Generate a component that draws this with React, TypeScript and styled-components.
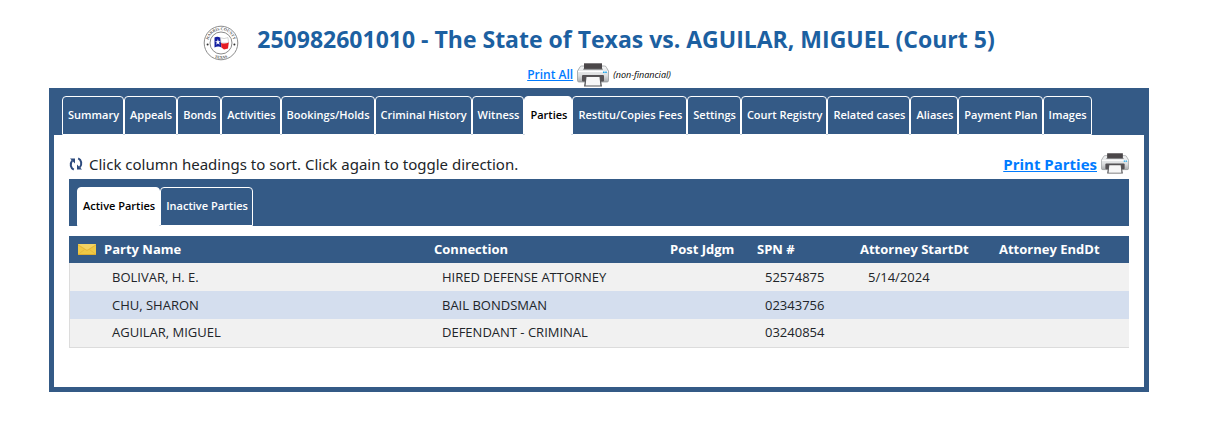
import React, { useState } from "react";
import styled, { createGlobalStyle } from "styled-components";

const BLUE = "#345a86";
const LINK = "#007bff";

const GlobalStyle = createGlobalStyle`
  *, *::before, *::after { box-sizing: border-box; }
  body {
    margin: 0;
    background: #fff;
    color: #212529;
    font-family: "Segoe UI", "Open Sans", "Noto Sans", sans-serif;
    font-size: 16px;
    line-height: 24px;
  }
  button { font: inherit; color: inherit; cursor: pointer; }
`;

const Page = styled.main`
  padding: 24px 69px 24px 49px;
`;

const CaseHeader = styled.header`
  display: flex;
  align-items: center;
  justify-content: center;
  gap: 18px;
  height: 38px;
`;

const CaseTitle = styled.h1`
  margin: 0;
  padding-bottom: 8px;
  font-size: 23px;
  line-height: 32px;
  font-weight: 700;
  color: #1c60a1;
`;

const PrintRow = styled.div`
  display: flex;
  align-items: center;
  justify-content: center;
  gap: 4px;
  height: 26px;
`;

const PrintLink = styled.a<{ $large?: boolean }>`
  display: inline-flex;
  align-items: center;
  gap: 4px;
  color: ${LINK};
  font-size: ${(p) => (p.$large ? 15 : 12)}px;
  font-weight: ${(p) => (p.$large ? 700 : 600)};
`;

const Note = styled.em`
  font-size: 9px;
  line-height: 16px;
  color: #000;
`;

const Frame = styled.section`
  border: 5px solid ${BLUE};
  border-top: 0;
`;

const TabStrip = styled.div`
  display: flex;
  flex-wrap: wrap;
  background: ${BLUE};
  padding: 8px 8px 0;
`;

const Tab = styled.button<{ $active: boolean }>`
  height: 39px;
  padding: 0 4px 2px 5px;
  border: 1px solid #fff;
  border-radius: 4px 4px 0 0;
  background: ${(p) => (p.$active ? "#fff" : BLUE)};
  color: ${(p) => (p.$active ? "#000" : "#fff")};
  font-size: 11px;
  font-weight: 600;
  white-space: nowrap;
`;

const Panel = styled.div`
  padding: 16px 15px 39px;
`;

const HintRow = styled.div`
  display: flex;
  align-items: center;
  justify-content: space-between;
  height: 28px;
  padding-bottom: 3px;
`;

const Hint = styled.p`
  display: flex;
  align-items: center;
  gap: 6px;
  margin: 0;
  font-family: "Segoe UI", "Noto Sans", sans-serif;
  font-size: 15px;
`;

const PartyTable = styled.table`
  width: 100%;
  margin-top: 10px;
  table-layout: fixed;
  border-collapse: collapse;
  border-bottom: 1px solid #dcdcdc;
  font-size: 13px;
  line-height: 18px;
`;

const Col = styled.col<{ $w?: number }>`
  width: ${(p) => (p.$w ? `${p.$w}px` : "auto")};
`;

const HeadCell = styled.th`
  height: 27px;
  padding: 0 0 2px;
  background: ${BLUE};
  color: #fff;
  text-align: left;
  vertical-align: middle;
  font-size: 13px;
`;

const SortButton = styled.button`
  padding: 0;
  border: 0;
  background: none;
  font-weight: 700;
  white-space: nowrap;
`;

const MailCell = styled(HeadCell)`
  padding: 0 0 0 9px;
  svg { display: block; }
`;

const Row = styled.tr`
  height: 28px;
  background: #f1f1f1;
  box-shadow: inset 1px 0 #dcdcdc;
  &:nth-child(even) { background: #d4deee; }
`;

const Cell = styled.td`
  padding: 0 8px 1px;
  white-space: nowrap;
`;

function Printer({ width }: { width: number }) {
  return (
    <svg width={width} height={width * 0.75} viewBox="0 0 32 24" aria-hidden="true">
      <defs>
        <linearGradient id="body" x1="0" y1="0" x2="0" y2="1">
          <stop offset="0" stopColor="#f4f5f6" />
          <stop offset="0.6" stopColor="#dcdedf" />
          <stop offset="1" stopColor="#a9abad" />
        </linearGradient>
      </defs>
      <path d="M3 4 Q3.4 3 4.6 3 H27.4 Q29 3 29.4 4.4 L31.5 8 V17.6 Q31.5 19 30 19 H2 Q.5 19 .5 17.6 V8 Z" fill="url(#body)" stroke="#8d9092" strokeWidth=".7" />
      <rect x="7" y=".3" width="18" height="6" fill="#4b4749" />
      <path d="M6 6.2 H26" stroke="#77797b" strokeWidth=".8" />
      <path d="M1 8.5 H31" stroke="#fff" strokeWidth="1" />
      <rect x="5" y="12" width="22" height="6.5" rx="1" fill="#555255" />
      <path d="M8.6 13.5 H23.4 L25 23.5 H7 Z" fill="#58585a" />
      <path d="M9.5 14 H22.5 L23.4 22.6 H8.6 Z" fill="#f7f7f7" />
      <path d="M26 9.3 H27.6 M28.2 9.3 H29.8" stroke="#1ba5ea" strokeWidth="1.5" />
    </svg>
  );
}

function Seal() {
  return (
    <svg width="36" height="36" viewBox="0 0 36 36" role="img" aria-label="County seal">
      <defs>
        <path id="sealTop" d="M5.2 18 A12.8 12.8 0 0 1 30.8 18" />
        <path id="sealBottom" d="M2.2 18 A15.8 15.8 0 0 0 33.8 18" />
      </defs>
      <circle cx="18" cy="18" r="16.8" fill="#fff" stroke="#8b8b8b" strokeWidth="1" />
      <circle cx="18" cy="18" r="11" fill="#fff" stroke="#8b8b8b" strokeWidth="1" />
      <g fontFamily="Liberation Serif, serif" fontSize="4" fontWeight="700" fill="#555" textAnchor="middle">
        <text><textPath href="#sealTop" startOffset="50%">HARRIS COUNTY</textPath></text>
        <text><textPath href="#sealBottom" startOffset="50%">TEXAS</textPath></text>
      </g>
      <circle cx="4.6" cy="19.5" r="1" fill="#333" />
      <circle cx="31.4" cy="19.5" r="1" fill="#333" />
      <path d="M11.5 12.5 Q14.5 11 17.5 12.8 L18.5 22.4 Q15 20.6 11.5 22.6 Z" fill="#1420a0" />
      <path d="M17.5 12.8 Q21 14.4 25 12.6 L25.6 18 H18 Z" fill="#fff" stroke="#aaa" strokeWidth=".5" />
      <path d="M18 18 Q22 19.4 25.8 17.5 L25 23.4 L21 24.4 L18.5 22.4 Z" fill="#e51c23" />
      <path d="M14.9 14 L15.6 16.2 H17.7 L16 17.5 L16.7 19.8 L14.9 18.4 L13.1 19.8 L13.8 17.5 L12.1 16.2 H14.2 Z" fill="#fff" />
    </svg>
  );
}

function RefreshIcon() {
  return (
    <svg width="14" height="14" viewBox="0 0 14 14" aria-hidden="true">
      <g fill="none" stroke="#2d4a7d" strokeWidth="2">
        <path d="M4.8 12.6 C1.6 11.2 .6 6.8 3.2 3.6" />
        <path d="M9.2 1.4 C12.4 2.8 13.4 7.2 10.8 10.4" />
      </g>
      <path d="M1 1.4 H6 V6.4 Z M13 12.6 H8 V7.6 Z" fill="#2d4a7d" />
    </svg>
  );
}

function Envelope() {
  return (
    <svg width="18" height="11" viewBox="0 0 18 11" role="img" aria-label="Mail">
      <rect width="18" height="11" fill="#efc945" />
      <path d="M0 0 H18 L9 6 Z" fill="#f3d363" />
      <path d="M0 1 L9 6.5 L18 1 M0 10.5 L6.5 5.5 M18 10.5 L11.5 5.5" fill="none" stroke="#e3b23a" strokeWidth=".8" />
      <path d="M0 10.5 H18" stroke="#dfad2e" />
    </svg>
  );
}

const caseTabs = [
  "Summary", "Appeals", "Bonds", "Activities", "Bookings/Holds", "Criminal History", "Witness", "Parties",
  "Restitu/Copies Fees", "Settings", "Court Registry", "Related cases", "Aliases", "Payment Plan", "Images",
];
const partyTabs = ["Active Parties", "Inactive Parties"];

const columns = ["Party Name", "Connection", "Post Jdgm", "SPN #", "Attorney StartDt", "Attorney EndDt"];
const widths = [undefined, 236, 87, 103, 139, 130];

const parties = [
  ["BOLIVAR, H. E.", "HIRED DEFENSE ATTORNEY", "", "52574875", "5/14/2024", ""],
  ["CHU, SHARON", "BAIL BONDSMAN", "", "02343756", "", ""],
  ["AGUILAR, MIGUEL", "DEFENDANT - CRIMINAL", "", "03240854", "", ""],
];

function Tabs({ label, items, initial }: { label: string; items: string[]; initial: string }) {
  const [active, setActive] = useState(initial);
  return (
    <TabStrip role="tablist" aria-label={label}>
      {items.map((name) => (
        <Tab key={name} type="button" role="tab" aria-selected={name === active} $active={name === active} onClick={() => setActive(name)}>
          {name}
        </Tab>
      ))}
    </TabStrip>
  );
}

export default function App() {
  const [sort, setSort] = useState<{ column: number; dir: number } | null>(null);
  const rows = sort
    ? [...parties].sort((a, b) => a[sort.column].localeCompare(b[sort.column]) * sort.dir)
    : parties;
  const sortBy = (column: number) =>
    setSort((s) => ({ column, dir: s && s.column === column ? -s.dir : 1 }));

  return (
    <>
      <GlobalStyle />
      <Page>
        <CaseHeader>
          <Seal />
          <CaseTitle>250982601010 - The State of Texas vs. AGUILAR, MIGUEL (Court 5)</CaseTitle>
        </CaseHeader>
        <PrintRow>
          <PrintLink href="#print-all">Print All<Printer width={32} /></PrintLink>
          <Note>(non-financial)</Note>
        </PrintRow>
        <Frame>
          <Tabs label="Case sections" items={caseTabs} initial="Parties" />
          <Panel>
            <HintRow>
              <Hint><RefreshIcon />Click column headings to sort. Click again to toggle direction.</Hint>
              <PrintLink $large href="#print-parties">Print Parties<Printer width={28} /></PrintLink>
            </HintRow>
            <Tabs label="Party status" items={partyTabs} initial="Active Parties" />
            <PartyTable>
              <colgroup>
                <Col $w={35} />
                {widths.map((w, i) => <Col key={i} $w={w} />)}
              </colgroup>
              <thead>
                <tr>
                  <MailCell scope="col"><Envelope /></MailCell>
                  {columns.map((name, i) => (
                    <HeadCell key={name} scope="col">
                      <SortButton type="button" onClick={() => sortBy(i)}>{name}</SortButton>
                    </HeadCell>
                  ))}
                </tr>
              </thead>
              <tbody>
                {rows.map((row) => (
                  <Row key={row[3]}>
                    <Cell />
                    {row.map((value, i) => <Cell key={i}>{value}</Cell>)}
                  </Row>
                ))}
              </tbody>
            </PartyTable>
          </Panel>
        </Frame>
      </Page>
    </>
  );
}
